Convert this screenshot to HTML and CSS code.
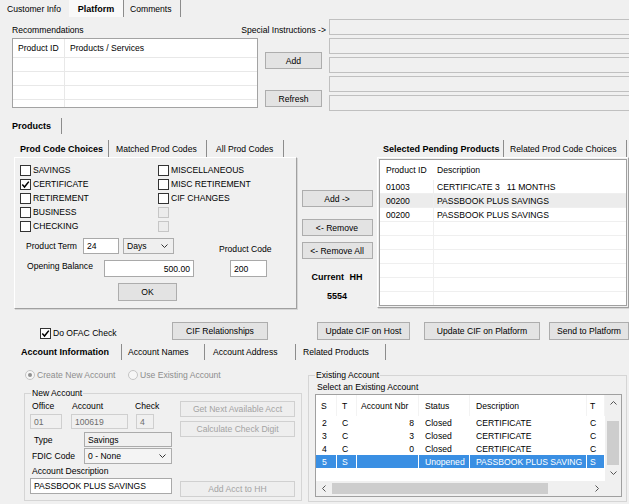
FILE: index.html
```html
<!DOCTYPE html>
<html>
<head>
<meta charset="utf-8">
<title>Platform</title>
<link rel="stylesheet" href="styles.css">
</head>
<body>
<div class="app">
  <div class="tabstrip top-tabs">
    <div class="tab t-cust">Customer Info</div>
    <div class="tab t-plat active">Platform</div>
    <div class="tab t-comm">Comments</div>
  </div>

  <section class="reco">
    <div class="reco-left">
      <div class="lbl">Recommendations</div>
      <div class="reco-list">
        <div class="lb-head"><span class="c-id">Product ID</span><span class="c-svc">Products / Services</span></div>
        <div class="lb-row"><span class="c-id"></span><span class="c-svc"></span></div>
        <div class="lb-row"><span class="c-id"></span><span class="c-svc"></span></div>
        <div class="lb-row"><span class="c-id"></span><span class="c-svc"></span></div>
        <div class="lb-row"><span class="c-id"></span><span class="c-svc"></span></div>
      </div>
    </div>
    <div class="reco-actions">
      <div class="lbl special">Special Instructions -&gt;</div>
      <button class="btn btn-add">Add</button>
      <button class="btn btn-refresh">Refresh</button>
    </div>
    <div class="reco-fields">
      <div class="sfield"></div>
      <div class="sfield"></div>
      <div class="sfield"></div>
      <div class="sfield"></div>
      <div class="sfield"></div>
    </div>
  </section>

  <div class="tabstrip prod-tabs"><div class="tab active t-products">Products</div></div>

  <section class="products">
    <div class="pcc">
      <div class="tabstrip inner-tabs">
        <div class="tab active w-pcc">Prod Code Choices</div>
        <div class="tab w-mpc">Matched Prod Codes</div>
        <div class="tab w-apc">All Prod Codes</div>
      </div>
      <div class="page pcc-page">
        <div class="checks">
          <div class="chk"><span class="box"></span>SAVINGS</div>
          <div class="chk"><span class="box"></span>MISCELLANEOUS</div>
          <div class="chk"><span class="box"><svg viewBox="0 0 9 9" width="9" height="9"><path d="M1.3 4.6 L3.5 7 L7.8 1.6" fill="none" stroke="#000" stroke-width="1.5"/></svg></span>CERTIFICATE</div>
          <div class="chk"><span class="box"></span>MISC RETIREMENT</div>
          <div class="chk"><span class="box"></span>RETIREMENT</div>
          <div class="chk"><span class="box"></span>CIF CHANGES</div>
          <div class="chk"><span class="box"></span>BUSINESS</div>
          <div class="chk"><span class="box dis"></span></div>
          <div class="chk"><span class="box"></span>CHECKING</div>
          <div class="chk"><span class="box dis"></span></div>
        </div>
        <div class="frow r1">
          <span class="flbl l-term">Product Term</span>
          <span class="input i-term">24</span>
          <span class="select s-days">Days<svg class="chev" viewBox="0 0 7 4" width="7" height="4"><path d="M0.5 0.5 L3.5 3.5 L6.5 0.5" fill="none" stroke="#333" stroke-width="1"/></svg></span>
          <span class="flbl l-code">Product Code</span>
        </div>
        <div class="frow r2">
          <span class="flbl l-bal">Opening Balance</span>
          <span class="input i-bal">500.00</span>
          <span class="input i-code">200</span>
        </div>
        <button class="btn btn-ok">OK</button>
      </div>
    </div>

    <div class="mid">
      <button class="btn btn-mid">Add -&gt;</button>
      <button class="btn btn-mid btn-rem">&lt;- Remove</button>
      <button class="btn btn-mid btn-remall">&lt;- Remove All</button>
      <div class="hh">Current HH</div>
      <div class="hhnum">5554</div>
    </div>

    <div class="pending">
      <div class="tabstrip inner-tabs">
        <div class="tab active w-spp">Selected Pending Products</div>
        <div class="tab w-rpc">Related Prod Code Choices</div>
      </div>
      <div class="page pend-page">
        <div class="lv">
          <div class="lvh"><span class="pcol-id">Product ID</span><span class="pcol-desc">Description</span></div>
          <div class="lvr"><span class="pcol-id">01003</span><span class="pcol-desc">CERTIFICATE 3&nbsp;&nbsp; 11 MONTHS</span></div>
          <div class="lvr alt"><span class="pcol-id">00200</span><span class="pcol-desc">PASSBOOK PLUS SAVINGS</span></div>
          <div class="lvr"><span class="pcol-id">00200</span><span class="pcol-desc">PASSBOOK PLUS SAVINGS</span></div>
          <div class="lvr"><span class="pcol-id"></span><span class="pcol-desc"></span></div>
          <div class="lvr"><span class="pcol-id"></span><span class="pcol-desc"></span></div>
          <div class="lvr"><span class="pcol-id"></span><span class="pcol-desc"></span></div>
          <div class="lvr"><span class="pcol-id"></span><span class="pcol-desc"></span></div>
          <div class="lvr"><span class="pcol-id"></span><span class="pcol-desc"></span></div>
          <div class="lvr"><span class="pcol-id"></span><span class="pcol-desc"></span></div>
        </div>
      </div>
    </div>
  </section>

  <div class="actions">
    <div class="ofac"><span class="box"><svg viewBox="0 0 9 9" width="9" height="9"><path d="M1.3 4.6 L3.5 7 L7.8 1.6" fill="none" stroke="#000" stroke-width="1.5"/></svg></span>Do OFAC Check</div>
    <button class="btn btn-act btn-cifrel">CIF Relationships</button>
    <button class="btn btn-act btn-host">Update CIF on Host</button>
    <button class="btn btn-act btn-cplat">Update CIF on Platform</button>
    <button class="btn btn-act btn-send">Send to Platform</button>
  </div>

  <div class="tabstrip acct-tabs">
    <div class="tab active w-ai">Account Information</div>
    <div class="tab w-an">Account Names</div>
    <div class="tab w-aa">Account Address</div>
    <div class="tab w-rp">Related Products</div>
  </div>

  <section class="acct">
    <div class="acct-left">
      <div class="radios">
        <div class="radio r-create"><span class="rdot on"></span>Create New Account</div>
        <div class="radio"><span class="rdot"></span>Use Existing Account</div>
      </div>
      <fieldset class="grp grp-new">
        <legend>New Account</legend>
        <div class="new-body">
          <div class="nb-left">
            <div class="acct-grid">
              <span class="g-office">Office</span>
              <span class="g-acct">Account</span>
              <span class="g-check">Check</span>
              <span class="dis-input w-off">01</span>
              <span class="dis-input w-num">100619</span>
              <span class="dis-input w-chk">4</span>
            </div>
            <div class="frow type-row">
              <span class="flbl l-type">Type</span>
              <span class="ro-input">Savings</span>
            </div>
            <div class="frow fdic-row">
              <span class="flbl l-fdic">FDIC Code</span>
              <span class="select s-fdic">0 - None<svg class="chev" viewBox="0 0 7 4" width="7" height="4"><path d="M0.5 0.5 L3.5 3.5 L6.5 0.5" fill="none" stroke="#333" stroke-width="1"/></svg></span>
            </div>
            <div class="desc-lbl">Account Description</div>
            <div class="input desc-input">PASSBOOK PLUS SAVINGS</div>
          </div>
          <div class="nb-right">
            <button class="btn btn-dis b-next">Get Next Available Acct</button>
            <button class="btn btn-dis b-calc">Calculate Check Digit</button>
            <button class="btn btn-dis b-addhh">Add Acct to HH</button>
          </div>
        </div>
      </fieldset>
    </div>

    <fieldset class="grp grp-exist">
      <legend>Existing Account</legend>
      <div class="ex-body">
        <div class="ex-lbl">Select an Existing Account</div>
        <div class="ex-lv">
          <div class="ex-main">
            <div class="ex-row ex-head"><span class="xs">S</span><span class="xt">T</span><span class="xn">Account Nbr</span><span class="xst">Status</span><span class="xd">Description</span><span class="xt2">T</span></div>
            <div class="ex-row"><span class="xs">2</span><span class="xt">C</span><span class="xn num">8</span><span class="xst">Closed</span><span class="xd">CERTIFICATE</span><span class="xt2">C</span></div>
            <div class="ex-row"><span class="xs">3</span><span class="xt">C</span><span class="xn num">3</span><span class="xst">Closed</span><span class="xd">CERTIFICATE</span><span class="xt2">C</span></div>
            <div class="ex-row"><span class="xs">4</span><span class="xt">C</span><span class="xn num">0</span><span class="xst">Closed</span><span class="xd">CERTIFICATE</span><span class="xt2">C</span></div>
            <div class="ex-row sel"><span class="xs">5</span><span class="xt">S</span><span class="xn num"></span><span class="xst">Unopened</span><span class="xd">PASSBOOK PLUS SAVING</span><span class="xt2">S</span></div>
          </div>
          <div class="vscroll">
            <div class="sb-arrow"><svg viewBox="0 0 7 4" width="7" height="4"><path d="M0.5 3.5 L3.5 0.5 L6.5 3.5" fill="none" stroke="#555" stroke-width="1"/></svg></div>
            <div class="sb-track"><div class="vthumb"></div></div>
            <div class="sb-arrow"><svg viewBox="0 0 7 4" width="7" height="4"><path d="M0.5 0.5 L3.5 3.5 L6.5 0.5" fill="none" stroke="#555" stroke-width="1"/></svg></div>
          </div>
          <div class="hscroll">
            <div class="sb-harrow"><svg viewBox="0 0 4 7" width="4" height="7"><path d="M3.5 0.5 L0.5 3.5 L3.5 6.5" fill="none" stroke="#555" stroke-width="1"/></svg></div>
            <div class="sb-htrack"><div class="hthumb"></div></div>
            <div class="sb-harrow"><svg viewBox="0 0 4 7" width="4" height="7"><path d="M0.5 0.5 L3.5 3.5 L0.5 6.5" fill="none" stroke="#555" stroke-width="1"/></svg></div>
          </div>
          <div class="corner"></div>
        </div>
      </div>
    </fieldset>
  </section>
</div>
</body>
</html>
```

FILE: styles.css
```css
* { box-sizing: border-box; margin: 0; padding: 0; }
html, body { background: #f0f0f0; }
body {
  width: 629px;
  height: 504px;
  overflow: hidden;
  font-family: "Liberation Sans", Arial, sans-serif;
  font-size: 8.6px;
  line-height: 12px;
  color: #000;
}
.app { width: 629px; height: 504px; overflow: hidden; }

/* tabs */
.tabstrip { display: flex; }
.tab {
  display: flex;
  align-items: center;
  white-space: nowrap;
  border-right: 1px solid #8c8c8c;
}
.tab.active { font-weight: bold; font-size: 9px; }

.top-tabs { height: 17px; }
.t-cust { width: 69px; padding-left: 7px; border-right: none; }
.t-plat { width: 55px; justify-content: center; background: #f9f9f9; }
.t-comm { width: 57px; padding-left: 6px; }

/* buttons */
.btn {
  font: inherit;
  color: #000;
  background: #e3e3e3;
  border: 1px solid #adadad;
  display: flex;
  align-items: center;
  justify-content: center;
  white-space: nowrap;
  flex: none;
}
.btn-dis { color: #a3a3a3; background: #eeeeee; border-color: #d0d0d0; }

/* recommendations */
.reco { display: flex; height: 95px; padding-left: 12px; }
.reco-left { width: 246px; padding-top: 7px; flex: none; }
.reco-list {
  margin-top: 2px;
  height: 70px;
  background: #fff;
  border: 1px solid #a3a3a3;
  overflow: hidden;
}
.lb-head { display: flex; height: 18px; align-items: center; }
.lb-row { display: flex; height: 14px; border-top: 1px solid #e8e8e8; }
.c-id { width: 52px; padding-left: 5px; border-right: 1px solid #e8e8e8; align-self: stretch; display: flex; align-items: center; }
.c-svc { padding-left: 5px; display: flex; align-items: center; }

.reco-actions { width: 71px; padding-top: 7px; display: flex; flex-direction: column; flex: none; }
.special { align-self: flex-end; margin-right: 3px; white-space: nowrap; }
.btn-add, .btn-refresh { align-self: flex-start; width: 57px; height: 17px; margin-left: 7px; }
.btn-add { margin-top: 16px; }
.btn-refresh { margin-top: 21px; }

.reco-fields { flex: 1; padding-top: 2px; display: flex; flex-direction: column; gap: 3px; margin-right: -4px; }
.sfield { height: 16px; border: 1px solid #c0c0c0; background: #f0f0f0; }

/* products */
.prod-tabs { margin-top: 5px; height: 18px; }
.t-products { width: 62px; padding-left: 12px; height: 16px; align-self: center; }

.products { display: flex; height: 175px; padding-left: 14px; }
.pcc { width: 283px; flex: none; }
.inner-tabs { margin-top: 5px; height: 17px; }
.w-pcc { width: 95px; padding-left: 6px; }
.w-mpc { width: 98px; padding-left: 7px; }
.w-apc { width: 77px; padding-left: 9px; }

.page {
  border: 1px solid;
  border-color: #ffffff #a0a0a0 #a0a0a0 #ffffff;
  box-shadow: 1px 1px 0 #d6d6d6;
}
.pcc-page { height: 152px; padding: 5px 0 0 5px; }

.checks { display: grid; grid-template-columns: 138px 1fr; grid-auto-rows: 14px; }
.chk { display: flex; align-items: center; white-space: nowrap; }
.box {
  width: 11px; height: 11px;
  border: 1px solid #333;
  background: #fff;
  margin-right: 2px;
  flex: none;
  display: flex; align-items: center; justify-content: center;
}
.box.dis { border-color: #c6c6c6; background: #ececec; }

.frow { display: flex; }
.flbl { white-space: nowrap; flex: none; }
.input {
  height: 16px;
  border: 1px solid #a9a9a9;
  background: #fff;
  display: flex;
  align-items: center;
  padding: 0 3px;
  white-space: nowrap;
  flex: none;
}
.select {
  height: 16px;
  border: 1px solid #adadad;
  background: #efefef;
  display: flex;
  align-items: center;
  justify-content: space-between;
  padding: 0 5px 0 3px;
  white-space: nowrap;
  flex: none;
}
.r1 { margin-top: 5px; height: 16px; align-items: center; }
.l-term { margin-left: 6px; width: 57px; }
.i-term { width: 36px; }
.s-days { margin-left: 4px; width: 51px; }
.l-code { margin-left: 45px; align-self: flex-end; margin-bottom: -1px; }
.r2 { margin-top: 6px; height: 17px; }
.l-bal { margin-left: 7px; width: 77px; }
.i-bal { width: 90px; height: 17px; justify-content: flex-end; }
.i-code { margin-left: 36px; width: 37px; height: 17px; }
.btn-ok { margin: 6px 0 0 98px; width: 59px; height: 18px; }

.mid { width: 80px; flex: none; padding-top: 55px; display: flex; flex-direction: column; align-items: center; }
.btn-mid { width: 71px; height: 17px; }
.btn-rem { margin-top: 12px; }
.btn-remall { margin-top: 6px; }
.hh { margin-top: 12px; font-weight: bold; font-size: 9px; word-spacing: 3px; }
.hhnum { margin-top: 7px; font-weight: bold; font-size: 9px; }

.pending { width: 252px; flex: none; }
.w-spp { width: 127px; padding-left: 6px; }
.w-rpc { width: 123px; padding-left: 6px; }
.pend-page { height: 151px; padding: 1px; }
.lv { background: #fff; border: 1px solid #a0a0a0; height: 100%; overflow: hidden; }
.lvh { display: flex; height: 20px; align-items: center; }
.lvr { display: flex; height: 14px; align-items: stretch; border-bottom: 1px solid #efefef; }
.lvr.alt { background: #ececec; }
.pcol-id { width: 54px; padding-left: 6px; flex: none; display: flex; align-items: center; }
.lvr .pcol-id { border-right: 1px solid #efefef; }
.pcol-desc { padding-left: 3px; display: flex; align-items: center; white-space: nowrap; }

/* action buttons */
.actions { display: flex; margin-top: 12px; height: 18px; align-items: center; }
.ofac { margin-left: 40px; width: 132px; display: flex; align-items: center; margin-top: 4px; flex: none; white-space: nowrap; }
.btn-act { height: 18px; }
.btn-cifrel { width: 96px; }
.btn-host { margin-left: 49px; width: 93px; }
.btn-cplat { margin-left: 14px; width: 116px; }
.btn-send { margin-left: 9px; width: 80px; }

/* account tabs */
.acct-tabs { margin-top: 3px; height: 18px; padding-left: 14px; }
.acct-tabs .tab { height: 16px; align-self: center; }
.w-ai { width: 108px; padding-left: 7px; }
.w-an { width: 83px; padding-left: 6px; }
.w-aa { width: 91px; padding-left: 8px; }
.w-rp { width: 90px; padding-left: 7px; }

/* account page */
.acct { display: flex; padding-top: 8px; height: 143px; }
.acct-left { width: 302px; padding-left: 24px; flex: none; }
.radios { display: flex; height: 12px; align-items: center; color: #8d8d8d; }
.radio { display: flex; align-items: center; white-space: nowrap; }
.r-create { margin-left: 1px; width: 103px; }
.rdot {
  width: 10px; height: 10px;
  border-radius: 50%;
  border: 1px solid #c4c4c4;
  background: #f6f6f6;
  margin-right: 2px;
  display: flex; align-items: center; justify-content: center;
  flex: none;
}
.rdot.on::after { content: ""; width: 4px; height: 4px; border-radius: 50%; background: #8f8f8f; }

.grp { border: 1px solid #d5d5d5; padding: 0; margin: 0; min-width: 0; }
.grp legend { margin-left: 6px; padding: 0 1px; line-height: 12px; }
.grp-new { margin-top: 6px; width: 278px; height: 114px; }

.new-body { display: flex; padding: 1px 0 0 5px; }
.nb-left { width: 142px; flex: none; }
.acct-grid {
  display: grid;
  grid-template-columns: 41px 65px 18px;
  grid-template-rows: 12px 15px;
  row-gap: 2px;
}
.g-office { padding-left: 2px; }
.g-acct { padding-left: 1px; }
.g-check { margin-left: -1px; }
.dis-input {
  border: 1px solid #cfcfcf;
  background: #f0f0f0;
  color: #6d6d6d;
  height: 15px;
  padding-left: 3px;
  display: flex;
  align-items: center;
}
.w-off { width: 32px; }
.w-num { width: 57px; }
.w-chk { width: 18px; }
.type-row { margin-top: 3px; height: 15px; align-items: center; }
.l-type { width: 54px; padding-left: 4px; }
.ro-input {
  width: 88px; height: 15px;
  border: 1px solid #ababab;
  background: #f0f0f0;
  padding-left: 3px;
  display: flex; align-items: center;
}
.fdic-row { margin-top: 1px; height: 16px; align-items: center; }
.l-fdic { width: 54px; padding-left: 2px; }
.s-fdic { width: 88px; background: #f4f4f4; }
.desc-lbl { margin-top: 1px; padding-left: 2px; height: 12px; }
.desc-input { margin-top: 1px; width: 142px; }

.nb-right { margin-left: 8px; width: 115px; display: flex; flex-direction: column; flex: none; }
.nb-right .btn { width: 115px; height: 16px; }
.b-next { margin-top: 1px; }
.b-calc { margin-top: 4px; }
.b-addhh { margin-top: 44px; }

.grp-exist { margin-left: 6px; width: 319px; height: 133px; flex: none; }
.ex-body { padding-left: 6px; }
.ex-lbl { padding-left: 2px; height: 12px; }
.ex-lv {
  margin-top: 1px;
  width: 307px; height: 103px;
  border: 1px solid #a0a0a0;
  background: #fff;
  display: grid;
  grid-template-columns: 289px 16px;
  grid-template-rows: 86px 15px;
}
.ex-main { overflow: hidden; }
.ex-row { display: flex; height: 13px; }
.ex-head { height: 21px; }
.ex-row span { display: flex; align-items: center; white-space: nowrap; overflow: hidden; flex: none; border-right: 1px solid #fff; }
.ex-head span { border-right-color: #f3f3f3; }
.xs { width: 21px; padding-left: 6px; }
.ex-head .xs { padding-left: 5px; }
.xt { width: 20px; padding-left: 5px; }
.xn { width: 62px; padding-left: 4px; }
.xn.num { justify-content: flex-end; padding: 0 4px 0 0; }
.xst { width: 51px; padding-left: 6px; }
.xd { width: 117px; padding-left: 6px; }
.xt2 { width: 18px; padding-left: 3px; }
.ex-row.sel { background: #3a8fe3; color: #fff; }

.vscroll { background: #f0f0f0; display: flex; flex-direction: column; }
.sb-arrow { height: 16px; display: flex; align-items: center; justify-content: center; flex: none; }
.sb-track { flex: 1; padding: 10px 2px 0 2px; }
.vthumb { height: 44px; background: #cdcdcd; }
.hscroll { background: #f0f0f0; display: flex; }
.sb-harrow { width: 16px; display: flex; align-items: center; justify-content: center; flex: none; }
.sb-htrack { flex: 1; display: flex; align-items: center; }
.hthumb { width: 216px; height: 11px; background: #cdcdcd; }
.corner { background: #f0f0f0; }
```
